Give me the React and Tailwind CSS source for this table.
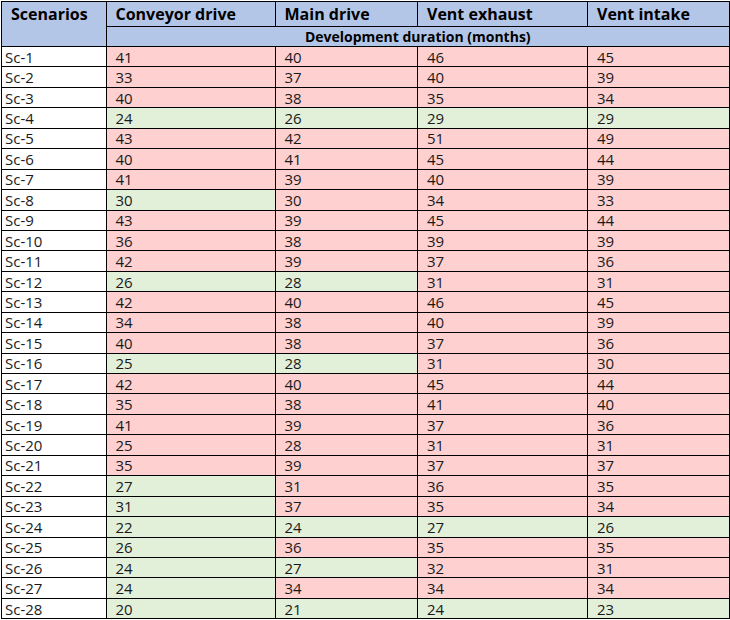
import React from 'react'

const rows = [
    ['Sc-1', [41, 'r'], [40, 'r'], [46, 'r'], [45, 'r']],
    ['Sc-2', [33, 'r'], [37, 'r'], [40, 'r'], [39, 'r']],
    ['Sc-3', [40, 'r'], [38, 'r'], [35, 'r'], [34, 'r']],
    ['Sc-4', [24, 'g'], [26, 'g'], [29, 'g'], [29, 'g']],
    ['Sc-5', [43, 'r'], [42, 'r'], [51, 'r'], [49, 'r']],
    ['Sc-6', [40, 'r'], [41, 'r'], [45, 'r'], [44, 'r']],
    ['Sc-7', [41, 'r'], [39, 'r'], [40, 'r'], [39, 'r']],
    ['Sc-8', [30, 'g'], [30, 'r'], [34, 'r'], [33, 'r']],
    ['Sc-9', [43, 'r'], [39, 'r'], [45, 'r'], [44, 'r']],
    ['Sc-10', [36, 'r'], [38, 'r'], [39, 'r'], [39, 'r']],
    ['Sc-11', [42, 'r'], [39, 'r'], [37, 'r'], [36, 'r']],
    ['Sc-12', [26, 'g'], [28, 'g'], [31, 'r'], [31, 'r']],
    ['Sc-13', [42, 'r'], [40, 'r'], [46, 'r'], [45, 'r']],
    ['Sc-14', [34, 'r'], [38, 'r'], [40, 'r'], [39, 'r']],
    ['Sc-15', [40, 'r'], [38, 'r'], [37, 'r'], [36, 'r']],
    ['Sc-16', [25, 'g'], [28, 'g'], [31, 'r'], [30, 'r']],
    ['Sc-17', [42, 'r'], [40, 'r'], [45, 'r'], [44, 'r']],
    ['Sc-18', [35, 'r'], [38, 'r'], [41, 'r'], [40, 'r']],
    ['Sc-19', [41, 'r'], [39, 'r'], [37, 'r'], [36, 'r']],
    ['Sc-20', [25, 'r'], [28, 'r'], [31, 'r'], [31, 'r']],
    ['Sc-21', [35, 'r'], [39, 'r'], [37, 'r'], [37, 'r']],
    ['Sc-22', [27, 'g'], [31, 'r'], [36, 'r'], [35, 'r']],
    ['Sc-23', [31, 'g'], [37, 'r'], [35, 'r'], [34, 'r']],
    ['Sc-24', [22, 'g'], [24, 'g'], [27, 'g'], [26, 'g']],
    ['Sc-25', [26, 'g'], [36, 'r'], [35, 'r'], [35, 'r']],
    ['Sc-26', [24, 'g'], [27, 'g'], [32, 'r'], [31, 'r']],
    ['Sc-27', [24, 'g'], [34, 'r'], [34, 'r'], [34, 'r']],
    ['Sc-28', [20, 'g'], [21, 'g'], [24, 'g'], [23, 'g']],
]

const App = () => {
    return (
        <div className="pl-[1px] pt-[1px] bg-white" style={{ fontFamily: '"Open Sans", "Noto Sans", sans-serif' }}>
            <table className="border-collapse table-fixed w-[728px] text-[#1a1a1a]">
                <colgroup>
                    <col className="w-[104.5px]" />
                    <col className="w-[169px]" />
                    <col className="w-[142.5px]" />
                    <col className="w-[170px]" />
                    <col className="w-[142px]" />
                </colgroup>
                <thead>
                    <tr className="h-[25px] bg-[#b4c6e7]">
                        <th rowSpan={2} className="border border-black text-left align-top pl-[9px] pt-[1px] text-[16px] font-bold leading-[22px] text-black">Scenarios</th>
                        <th className="border border-black text-left pl-[9px] text-[16px] font-bold leading-[22px] text-black">Conveyor drive</th>
                        <th className="border border-black text-left pl-[9px] text-[16px] font-bold leading-[22px] text-black">Main drive</th>
                        <th className="border border-black text-left pl-[9px] text-[16px] font-bold leading-[22px] text-black">Vent exhaust</th>
                        <th className="border border-black text-left pl-[9px] text-[16px] font-bold leading-[22px] text-black">Vent intake</th>
                    </tr>
                    <tr className="h-[20px] bg-[#b4c6e7]">
                        <th colSpan={4} className="border border-black text-center text-[14px] font-bold leading-[18px] text-black">Development duration (months)</th>
                    </tr>
                </thead>
                <tbody>
                    {rows.map(r => {
                        return <tr key={r[0]} className="h-[20.44px]">
                            <td className="border border-black bg-white pl-[3px] text-[15px] leading-[18px]">{r[0]}</td>
                            {r.slice(1).map((c, i) => (
                                <td key={i} className={(c[1] === 'g' ? 'bg-[#e2efd9]' : 'bg-[#ffd0d0]') + ' border border-black pl-[9px] text-[15px] leading-[18px]'}>{c[0]}</td>
                            ))}
                        </tr>
                    })}
                </tbody>
            </table>
        </div>
    )
}

export default App
